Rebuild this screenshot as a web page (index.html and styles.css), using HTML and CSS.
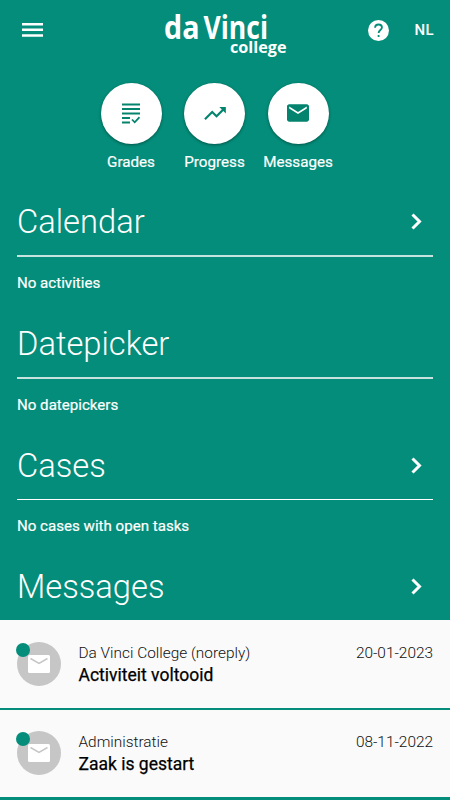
FILE: index.html
```html
<!DOCTYPE html>
<html lang="en">
<head>
<meta charset="utf-8">
<title>da Vinci college</title>
<link rel="stylesheet" href="styles.css">
</head>
<body>
<header class="topbar">
  <svg class="menu" viewBox="0 0 21 14"><path d="M0 0h21v2.5H0zM0 5.6h21v2.5H0zM0 11.2h21v2.5H0z"/></svg>
  <svg class="logo" viewBox="0 0 130 50">
    <text class="logo-main" x="3" y="30.5" textLength="35.500" lengthAdjust="spacingAndGlyphs">da</text>
    <text class="logo-main" x="42.500" y="30.5" textLength="64.500" lengthAdjust="spacingAndGlyphs">Vinci</text>
    <text class="logo-sub" x="69" y="44.5" textLength="56.500" lengthAdjust="spacingAndGlyphs">college</text>
  </svg>
  <div class="actions">
    <svg class="help" viewBox="2 2 20 20"><circle cx="12" cy="12" r="10"/><path class="mark" d="M8.700 9.400c.1-1.900 1.400-3.100 3.300-3.100s3.300 1.100 3.300 2.900c0 2.200-3.200 2.500-3.200 5.100M12.100 16.300v1.800"/></svg>
    <span class="lang">NL</span>
  </div>
</header>
<nav class="shortcuts">
  <a class="shortcut"><span class="disc"><svg class="icon-grades" viewBox="0 0 18 21"><path d="M0 .5h18v2H0zM0 5h18v2H0zM0 9.500h18v2H0zM0 14h8v2H0zM0 18.500h8v2H0z"/><path class="stroke" d="M10 16.500l2.700 2.800L17.500 14.200"/></svg></span><span>Grades</span></a>
  <a class="shortcut"><span class="disc"><svg class="icon-trend" viewBox="2 6 20 12"><path d="M16 6l2.290 2.290-4.880 4.880-4-4L2 16.590 3.410 18l6-6 4 4 6.300-6.290L22 12V6z"/></svg></span><span>Progress</span></a>
  <a class="shortcut"><span class="disc"><svg class="icon-mail" viewBox="2 4 20 16"><path d="M20 4H4c-1.100 0-2 .9-2 2v12c0 1.100.9 2 2 2h16c1.100 0 2-.9 2-2V6c0-1.100-.9-2-2-2zm0 4l-8 5-8-5V6l8 5 8-5v2z"/></svg></span><span>Messages</span></a>
</nav>
<main>
  <section class="block">
    <div class="head"><h2>Calendar</h2><svg class="chevron" viewBox="0 0 11 17"><path d="M1.500 1.500l7 7-7 7"/></svg></div>
    <p>No activities</p>
  </section>
  <section class="block">
    <div class="head"><h2>Datepicker</h2></div>
    <p>No datepickers</p>
  </section>
  <section class="block">
    <div class="head thin"><h2>Cases</h2><svg class="chevron" viewBox="0 0 11 17"><path d="M1.500 1.500l7 7-7 7"/></svg></div>
    <p>No cases with open tasks</p>
  </section>
  <section class="block last">
    <div class="head"><h2>Messages</h2><svg class="chevron" viewBox="0 0 11 17"><path d="M1.500 1.500l7 7-7 7"/></svg></div>
  </section>
  <div class="messages">
    <article class="message">
      <div class="avatar"><svg viewBox="0 0 22 18"><rect width="22" height="18" rx="1.500"/><path d="M2.500 3.500L11 8.500l8.500-5"/></svg><i class="unread"></i></div>
      <div class="text"><div class="sender">Da Vinci College (noreply)</div><div class="subject">Activiteit voltooid</div></div>
      <time>20-01-2023</time>
    </article>
    <article class="message">
      <div class="avatar"><svg viewBox="0 0 22 18"><rect width="22" height="18" rx="1.500"/><path d="M2.500 3.500L11 8.500l8.500-5"/></svg><i class="unread"></i></div>
      <div class="text"><div class="sender">Administratie</div><div class="subject">Zaak is gestart</div></div>
      <time>08-11-2022</time>
    </article>
  </div>
</main>
</body>
</html>
```
FILE: styles.css
```css
* { box-sizing: border-box; }
body {
  margin: 0;
  height: 800px;
  overflow: hidden;
  background: #048d7a;
  color: #fff;
  font-family: Roboto, sans-serif;
  font-size: 15px;
}
svg { display: block; fill: currentColor; }
.topbar {
  display: grid;
  grid-template-columns: 139px 130px 1fr;
  height: 60px;
  padding: 8px 16px 0 22px;
}
.menu { width: 21px; height: 14px; margin-top: 15px; }
.logo { width: 130px; height: 50px; overflow: visible; font-family: "Open Sans", sans-serif; font-weight: 700; }
.logo-main { font-size: 33px; }
.logo-sub { font-size: 16px; }
.actions { display: flex; align-items: center; justify-content: flex-end; height: 44px; gap: 25px; }
.help { width: 21px; height: 21px; }
.mark { fill: none; stroke: #048d7a; stroke-width: 1.700; }
.lang { font-weight: 500; letter-spacing: 0.4px; line-height: 20px; }
.shortcuts { display: flex; justify-content: center; height: 128px; padding: 22.500px 0 0; margin-right: 21px; }
.shortcut { display: flex; flex-direction: column; align-items: center; width: 83.500px; gap: 8.500px; line-height: 20px; font-size: 15.200px; font-weight: 450; -webkit-text-stroke: 0.2px; }
.disc {
  display: flex; align-items: center; justify-content: center;
  width: 61px; height: 61px; border-radius: 50%;
  background: #fff; color: #04846f;
  box-shadow: 0 1px 3px rgba(0, 0, 0, .4);
}
.icon-grades { width: 18px; height: 21px; }
.stroke { fill: none; stroke: currentColor; stroke-width: 1.800; }
.icon-trend { width: 22px; height: 13px; }
.icon-mail { width: 22px; height: 18px; }
.block { height: 121.700px; padding: 0 17px; }
.head {
  display: flex; align-items: center; justify-content: space-between;
  height: 69px; padding-right: 11px;
  border-bottom: 2px solid #c6e3de;
}
.head.thin { border-bottom: 1px solid #fff; }
h2 { margin: 0; font-size: 32.700px; line-height: 40px; font-weight: 300; }
.block + .block h2 { padding-top: 1px; }
.chevron { width: 11px; height: 17px; fill: none; stroke: #fff; stroke-width: 3; }
.block p { margin: 0; padding-top: 16px; line-height: 20px; font-size: 15.100px; font-weight: 450; -webkit-text-stroke: 0.2px; }
.block.last { height: 67.400px; }
.last .head { border: 0; height: 67.400px; }
.messages { display: flex; flex-direction: column; gap: 2px; }
.message { display: flex; height: 87.200px; padding: 21.600px 17px 0; background: #fafafa; color: #111; }
.avatar {
  position: relative;
  display: flex; align-items: center; justify-content: center;
  width: 44px; height: 44px; border-radius: 50%; background: #c6c6c6; color: #fff;
}
.avatar svg { width: 22px; height: 18px; }
.avatar path { fill: none; stroke: #c6c6c6; stroke-width: 1.500; }
.unread { position: absolute; left: -1px; top: 1px; width: 14px; height: 14px; border-radius: 50%; background: #048d7a; }
.text { flex: 1; margin-left: 17.500px; }
.sender, time { font-size: 15.400px; line-height: 22px; font-weight: 350; }
.subject { font-size: 17.500px; line-height: 22px; font-weight: 450; color: #000; -webkit-text-stroke: 0.25px; }
```
